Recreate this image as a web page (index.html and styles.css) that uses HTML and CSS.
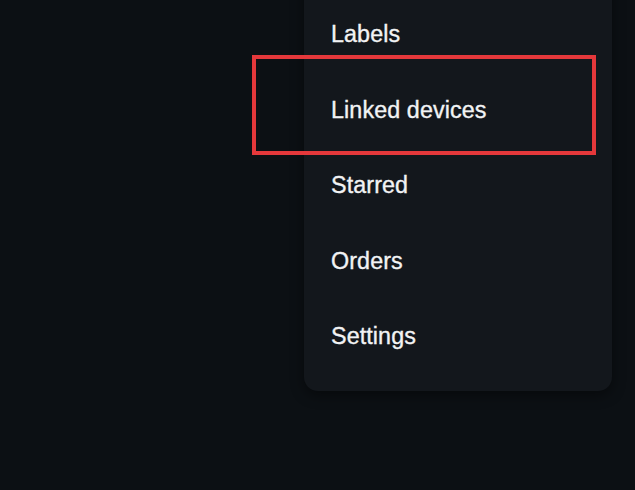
FILE: index.html
```html
<!DOCTYPE html>
<html lang="en">
<head>
<meta charset="utf-8">
<title>Menu</title>
<link rel="stylesheet" href="styles.css">
</head>
<body>
<div class="page">
  <nav class="menu">
    <ul class="menu-list">
      <li class="menu-item">Labels</li>
      <li class="menu-item is-marked">Linked devices<span class="highlight"></span></li>
      <li class="menu-item">Starred</li>
      <li class="menu-item">Orders</li>
      <li class="menu-item">Settings</li>
    </ul>
  </nav>
</div>
</body>
</html>
```
FILE: styles.css
```css
html, body {
  margin: 0;
  padding: 0;
  background: #0c1014;
  height: 100%;
  overflow: hidden;
}
.page {
  display: flex;
  justify-content: flex-end;
  padding-right: 23px;
}
.menu {
  width: 308px;
  margin-top: -40px;
  padding: 36px 0 17px;
  background: #13171c;
  border-radius: 0 0 14px 14px;
  box-shadow: 0 4px 14px rgba(0, 0, 0, 0.45);
}
.menu-list {
  list-style: none;
  margin: 0;
  padding: 0;
}
.menu-item {
  position: relative;
  height: 75.5px;
  display: flex;
  align-items: center;
  padding-left: 27px;
  padding-top: 2px;
  box-sizing: border-box;
  font-family: "Liberation Sans", Arial, sans-serif;
  font-size: 23.3px;
  font-weight: 400;
  -webkit-text-stroke: 0.35px #f2f3f4;
  color: #f2f3f4;
  letter-spacing: 0.1px;
}
.highlight {
  position: absolute;
  left: -52px;
  top: -17px;
  width: 344px;
  height: 100px;
  box-sizing: border-box;
  border: 4.5px solid #e5383b;
  pointer-events: none;
}
```
